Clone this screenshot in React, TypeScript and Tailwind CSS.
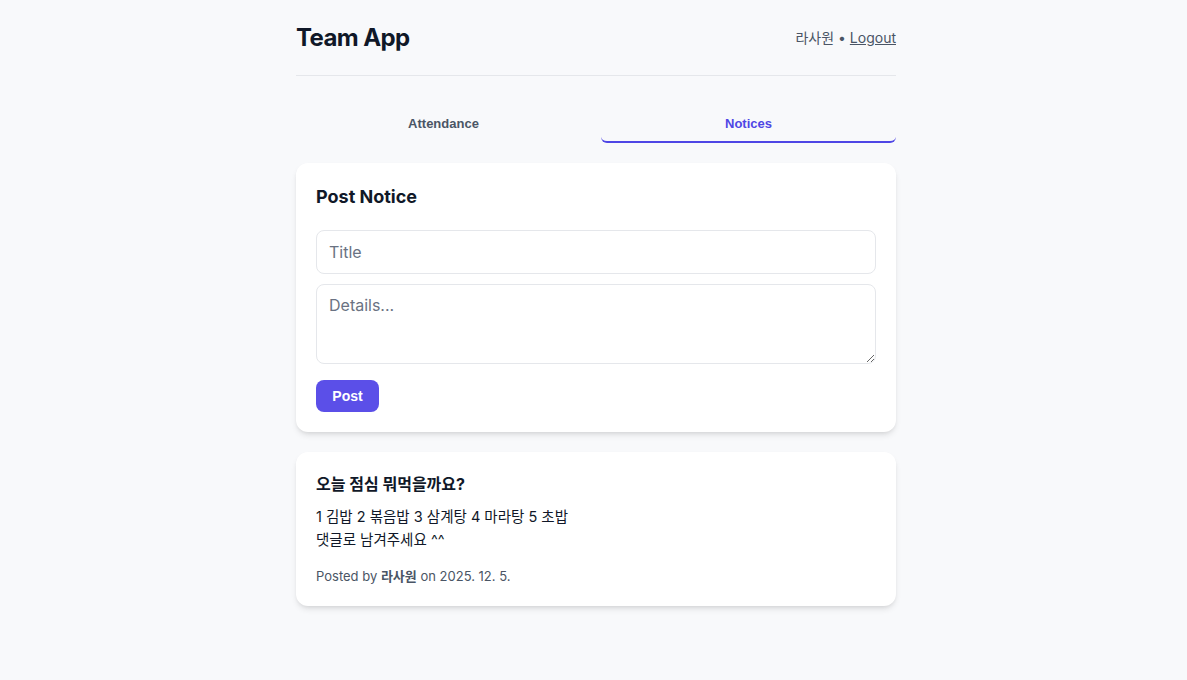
import { useState } from 'react';

const sans = "font-['Inter','Noto_Sans_CJK_KR',sans-serif]";
const btnFont = "font-['Liberation_Sans','Noto_Sans_CJK_KR',sans-serif]";

function Header() {
  return (
    <header className="flex items-center justify-between pt-[22px] pb-[21px] border-b border-gray-200">
      <h1 className="text-2xl font-bold text-gray-900 tracking-tight">Team App</h1>
      <div className="text-sm text-gray-600">
        라사원 • <a href="#" className="underline">Logout</a>
      </div>
    </header>
  );
}

function Tabs({ tab, setTab }: { tab: string; setTab: (t: string) => void }) {
  const items = ['Attendance', 'Notices'];
  return (
    <div className="grid grid-cols-2 gap-2.5 mt-[27px]">
      {items.map((t) => (
        <button
          key={t}
          onClick={() => setTab(t)}
          className={`${btnFont} text-[13px] font-bold pt-[11px] pb-[7px] rounded-md border-b-2 ${
            tab === t ? 'text-[#4f46e5] border-[#4f46e5]' : 'text-gray-600 border-transparent'
          }`}
        >
          {t}
        </button>
      ))}
    </div>
  );
}

function PostForm() {
  return (
    <section className="bg-white rounded-xl shadow-md p-5">
      <h2 className="text-lg font-bold text-gray-900 mb-[19px]">Post Notice</h2>
      <div className="flex flex-col gap-2.5">
        <input
          placeholder="Title"
          className="h-11 w-full border border-gray-200 rounded-lg px-3 text-base text-gray-900 placeholder:text-gray-500 outline-none"
        />
        <textarea
          placeholder="Details..."
          className="h-20 w-full border border-gray-200 rounded-lg px-3 py-2 text-base text-gray-900 placeholder:text-gray-500 outline-none"
        />
      </div>
      <button className={`${btnFont} mt-4 h-8 w-[63px] rounded-lg bg-[#5b4fe8] text-white text-sm font-bold`}>
        Post
      </button>
    </section>
  );
}

function NoticeCard() {
  return (
    <article className="bg-white rounded-xl shadow-md p-5">
      <h3 className="text-base font-bold text-gray-900">오늘 점심 뭐먹을까요?</h3>
      <p className="mt-[9px] text-[14.5px] leading-[23px] text-gray-900 whitespace-pre-line">
        {'1 김밥 2 볶음밥 3 삼계탕 4 마라탕 5 초밥\n댓글로 남겨주세요 ^^'}
      </p>
      <p className="mt-[15px] text-[13px] leading-5 text-gray-600">
        Posted by <span className="font-bold">라사원</span> on 2025. 12. 5.
      </p>
    </article>
  );
}

export default function App() {
  const [tab, setTab] = useState('Notices');
  return (
    <div className={`${sans} min-h-screen bg-[#f8f9fb] pl-[5px]`}>
      <div className="max-w-[600px] mx-auto">
        <Header />
        <Tabs tab={tab} setTab={setTab} />
        <div className="mt-5 flex flex-col gap-5">
          <PostForm />
          <NoticeCard />
        </div>
      </div>
    </div>
  );
}
